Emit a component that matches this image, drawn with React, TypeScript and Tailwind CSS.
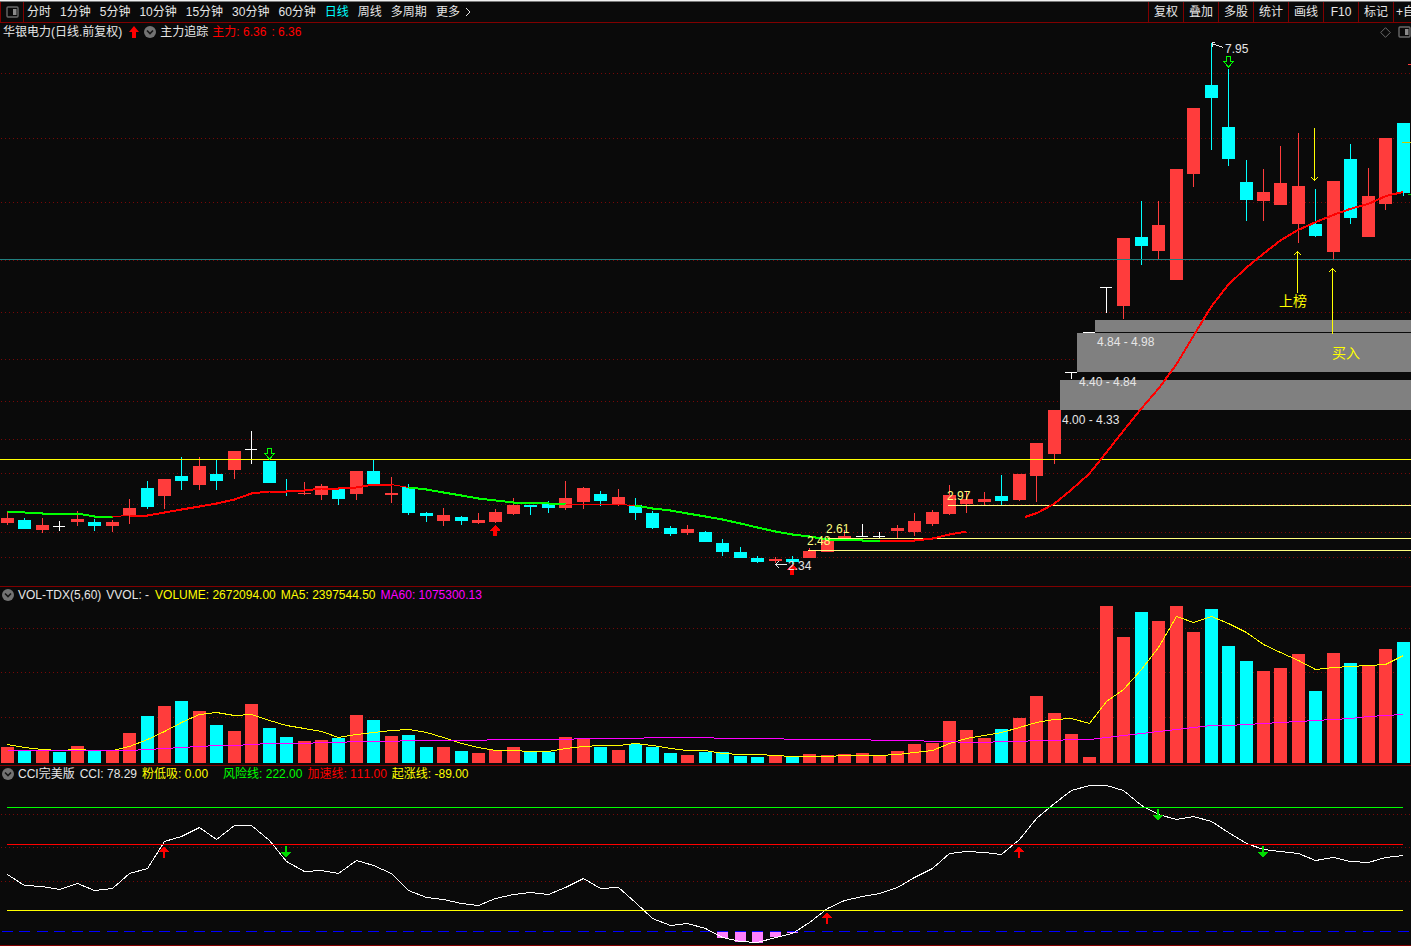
import type { ReactNode } from "react";

const RED = "#ff3c3c";
const CYAN = "#00ffff";
const WHITE = "#ffffff";

const COUNT = 81;
const STEP = 17.445;
const center = (i: number) => Math.floor(7.5 + i * STEP);

type Kind = "r" | "c" | "w";

// kind, high, body top, body bottom, low
const candles: [Kind, number, number, number, number][] = [
  ["r", 511, 518, 523, 525],
  ["c", 518, 520, 529, 529],
  ["r", 518, 525, 530, 533],
  ["w", 521, 526, 527, 531],
  ["r", 511, 519, 522, 526],
  ["c", 519, 522, 526, 531],
  ["r", 520, 522, 526, 532],
  ["r", 499, 508, 516, 524],
  ["c", 481, 488, 507, 509],
  ["r", 479, 479, 496, 509],
  ["c", 457, 476, 481, 490],
  ["r", 457, 466, 485, 490],
  ["c", 460, 474, 481, 490],
  ["r", 451, 451, 470, 479],
  ["w", 431, 449, 450, 464],
  ["c", 461, 461, 483, 483],
  ["c", 479, 491, 492, 496],
  ["r", 482, 493, 494, 495],
  ["r", 484, 486, 495, 500],
  ["c", 488, 488, 499, 505],
  ["r", 471, 471, 494, 500],
  ["c", 460, 471, 484, 484],
  ["r", 477, 493, 495, 503],
  ["c", 484, 487, 513, 515],
  ["c", 512, 513, 516, 522],
  ["r", 508, 515, 521, 526],
  ["c", 516, 517, 521, 525],
  ["r", 513, 520, 523, 524],
  ["r", 509, 512, 522, 523],
  ["r", 498, 505, 514, 515],
  ["c", 505, 505, 507, 515],
  ["c", 501, 504, 508, 513],
  ["r", 481, 498, 508, 510],
  ["r", 487, 488, 502, 509],
  ["c", 491, 494, 501, 506],
  ["r", 489, 497, 504, 506],
  ["c", 498, 505, 513, 520],
  ["c", 511, 513, 528, 529],
  ["c", 526, 528, 534, 536],
  ["r", 525, 529, 533, 535],
  ["c", 531, 532, 542, 542],
  ["c", 539, 543, 552, 556],
  ["c", 547, 552, 558, 558],
  ["c", 556, 558, 562, 563],
  ["r", 557, 559, 561, 563],
  ["c", 556, 559, 562, 564],
  ["r", 548, 551, 558, 558],
  ["r", 536, 539, 552, 552],
  ["r", 530, 536, 539, 539],
  ["w", 524, 536, 537, 537],
  ["w", 532, 536, 537, 539],
  ["r", 525, 528, 531, 539],
  ["r", 513, 521, 532, 536],
  ["r", 510, 512, 524, 526],
  ["r", 485, 495, 514, 515],
  ["r", 491, 499, 504, 513],
  ["r", 492, 499, 502, 505],
  ["c", 475, 496, 501, 505],
  ["r", 474, 474, 500, 501],
  ["r", 443, 443, 476, 502],
  ["r", 410, 410, 454, 464],
  ["w", 372, 372, 373, 379],
  ["w", 332, 332, 333, 333],
  ["w", 287, 287, 288, 313],
  ["r", 238, 238, 306, 319],
  ["c", 201, 237, 246, 265],
  ["r", 201, 225, 251, 260],
  ["r", 169, 169, 280, 280],
  ["r", 108, 108, 174, 187],
  ["c", 43, 85, 98, 150],
  ["c", 69, 127, 159, 166],
  ["c", 160, 182, 200, 221],
  ["r", 169, 192, 201, 221],
  ["r", 146, 183, 205, 205],
  ["r", 133, 186, 224, 243],
  ["c", 189, 224, 236, 237],
  ["r", 181, 181, 252, 260],
  ["c", 144, 159, 218, 224],
  ["r", 168, 196, 237, 237],
  ["r", 138, 138, 204, 210],
  ["c", 123, 123, 193, 196],
];

const volumeTops = [
  747, 751, 751, 752, 746, 751, 751, 733, 716, 706, 701, 711, 725, 731, 704, 728, 737, 741, 740, 738,
  715, 720, 736, 735, 747, 747, 751, 753, 750, 747, 752, 752, 737, 739, 747, 750, 744, 747, 753, 755,
  752, 752, 756, 757, 756, 757, 754, 755, 754, 753, 756, 751, 744, 743, 721, 730, 738, 729, 718, 696,
  713, 734, 757, 606, 637, 612, 621, 606, 632, 609, 646, 661, 671, 668, 654, 691, 653, 663, 666, 649,
  642,
];

const volumeMa5 = [
  744, 747, 749, 750, 749, 750, 750, 746, 739, 731, 722, 714, 712, 715, 714, 720, 725, 728, 731, 737,
  734, 732, 730, 729, 732, 737, 743, 747, 750, 750, 751, 751, 748, 746, 745, 745, 743, 745, 748, 750,
  750, 753, 754, 754, 755, 756, 756, 756, 755, 755, 755, 754, 752, 750, 743, 738, 735, 732, 727, 722,
  719, 718, 723, 701, 689, 669, 647, 616, 622, 616, 623, 632, 644, 652, 660, 669, 667, 666, 665, 664,
  655,
];

const volumeMa60 = [
  750, 750, 750, 750, 750, 750, 750, 750, 749, 748, 747, 746, 745, 745, 744, 743, 743, 743, 742, 742,
  741, 741, 741, 740, 740, 740, 740, 740, 739, 739, 739, 739, 739, 738, 738, 738, 738, 737, 737, 737,
  737, 738, 738, 738, 738, 739, 739, 739, 739, 739, 740, 740, 740, 741, 741, 742, 742, 741, 741, 740,
  740, 739, 739, 737, 735, 733, 731, 729, 727, 725, 725, 724, 723, 722, 721, 720, 719, 718, 716, 715,
  714,
];

const cci = [
  874, 885, 886, 889, 883, 890, 888, 873, 868, 841, 836, 827, 839, 825, 825, 840, 861, 871, 870, 873,
  860, 865, 873, 890, 897, 899, 903, 905, 898, 894, 892, 894, 887, 878, 888, 887, 902, 918, 925, 923,
  928, 937, 941, 942, 937, 933, 922, 908, 900, 896, 893, 887, 877, 868, 853, 851, 852, 854, 839, 818,
  803, 790, 785, 785, 790, 805, 814, 819, 816, 821, 832, 843, 849, 851, 853, 860, 857, 861, 862, 857,
  855,
];

// trend line pieces: first candle, colour, width, y values
const trend: [number, string, number, number[]][] = [
  [0, "#00ff00", 2, [511, 512, 513, 513, 513, 516, 516]],
  [6, "#ff0000", 1, [516, 515]],
  [7, "#ff0000", 2, [515, 515, 512, 509, 506, 503, 499, 493, 491, 491, 490, 488, 488, 487, 484, 484]],
  [22, "#ff0000", 1, [484, 487]],
  [23, "#00ff00", 2, [487, 489, 492, 495, 498, 500, 502, 502, 503, 504]],
  [32, "#ff0000", 1, [504, 504, 504, 504, 505]],
  [36, "#00ff00", 2, [505, 508, 510, 513, 516, 519, 523, 527, 531, 534, 536, 539, 539, 540, 540]],
  [50, "#ff0000", 2, [540, 540, 540, 538, 534, 531]],
];

const rally = [
  [1025, 517], [1037, 513], [1054, 504], [1071, 490], [1089, 474], [1106, 453], [1124, 430],
  [1141, 409], [1159, 388], [1176, 365], [1194, 335], [1211, 307], [1228, 285], [1246, 268],
  [1263, 254], [1281, 240], [1298, 230], [1316, 222], [1333, 215], [1350, 209], [1368, 204],
  [1386, 196], [1403, 192],
];

const bands = [
  { x: 1095, top: 320, bottom: 332, label: "4.84 - 4.98", labelY: 346 },
  { x: 1077, top: 333, bottom: 372, label: "4.40 - 4.84", labelY: 386 },
  { x: 1060, top: 380, bottom: 410, label: "4.00 - 4.33", labelY: 424 },
];

const levels = [
  { x: 948, y: 505, label: "2.97", labelY: 500 },
  { x: 827, y: 538, label: "2.61", labelY: 533 },
  { x: 808, y: 550, label: "2.48", labelY: 545 },
];

const periods = ["分时", "1分钟", "5分钟", "10分钟", "15分钟", "30分钟", "60分钟", "日线", "周线", "多周期", "更多"];
const tools = ["复权", "叠加", "多股", "统计", "画线", "F10", "标记"];

const toPoints = (ys: number[], from = 0) =>
  ys.map((y, i) => `${center(from + i) + 0.5},${y + 0.5}`).join(" ");

function HLine({ y, x1 = 0, x2 = 1411, color }: { y: number; x1?: number; x2?: number; color: string }) {
  return <rect x={x1} y={y} width={x2 - x1} height={1} fill={color} />;
}

function Grid({ rows }: { rows: number[] }) {
  return (
    <g stroke="#780808" strokeDasharray="1 3">
      {rows.map((y) => (
        <line key={y} x1={1} x2={1411} y1={y + 0.5} y2={y + 0.5} />
      ))}
    </g>
  );
}

function Candle({ index }: { index: number }) {
  const [kind, high, top, bottom, low] = candles[index];
  const x = center(index);
  const fill = kind === "r" ? RED : kind === "c" ? CYAN : WHITE;
  return (
    <g fill={fill}>
      <rect x={x} y={high} width={1} height={low - high} />
      <rect x={x - 6} y={top} width={kind === "w" ? 12 : 13} height={bottom - top} />
    </g>
  );
}

function BuyArrow({ x, y }: { x: number; y: number }) {
  return <path d={`M${x} ${y}l5 5v1h-3v5h-4v-5h-3v-1z`} fill="#ff0000" />;
}

function SellArrow({ x, y }: { x: number; y: number }) {
  return (
    <path
      d={`M${x - 1.5} ${y + 0.5}h4v5h3l-5 5.5l-5 -5.5h3z`}
      fill="none"
      stroke="#00ff00"
    />
  );
}

function UpSignal({ x, y }: { x: number; y: number }) {
  return <path d={`M${x} ${y}l5 6h-4v6h-2v-6h-4z`} fill="#ff0000" />;
}

function DownSignal({ x, y }: { x: number; y: number }) {
  return <path d={`M${x} ${y + 12}l5 -6h-4v-6h-2v6h-4z`} fill="#00dc00" />;
}

function PanelIcon() {
  return (
    <svg width="13" height="12" viewBox="0 0 13 12" className="shrink-0" aria-hidden="true">
      <rect x="1" y="1" width="11" height="10" rx="1" fill="none" stroke="#6a6a6a" strokeWidth="1.4" />
      <rect x="7" y="3" width="3.5" height="6" fill="#8a8a8a" />
    </svg>
  );
}

function ToggleButton({ label }: { label: string }) {
  return (
    <button type="button" aria-label={label} className="size-3 shrink-0">
      <svg viewBox="0 0 12 12" className="size-3">
        <circle cx="6" cy="6" r="6" fill="#737373" />
        <path d="M3 4.5l3 3l3 -3" fill="none" stroke="#161616" strokeWidth="1.6" />
      </svg>
    </button>
  );
}

function Chart({ top, height, label, children }: { top: number; height: number; label: string; children: ReactNode }) {
  return (
    <svg
      viewBox={`0 ${top} 1411 ${height}`}
      className="block h-auto w-full"
      shapeRendering="crispEdges"
      role="img"
      aria-label={label}
    >
      {children}
    </svg>
  );
}

function Toolbar() {
  return (
    <header className="flex h-[22px] items-stretch justify-between overflow-hidden border-t border-b border-t-[#7a7a7a] border-b-[#800000]">
      <div className="flex">
        <button type="button" aria-label="侧栏" className="flex w-6 items-center justify-center border-x border-[#800000]">
          <PanelIcon />
        </button>
        <nav className="flex items-center gap-[9px] pl-[3px]">
          {periods.map((p) => (
            <button key={p} type="button" className={p === "日线" ? "text-[#00ffff]" : "text-[#e6e6e6]"}>
              {p}
            </button>
          ))}
          <svg width="6" height="10" viewBox="0 0 6 10" className="-ml-1" aria-hidden="true">
            <path d="M1 1l4 4l-4 4" fill="none" stroke="#e6e6e6" />
          </svg>
        </nav>
      </div>
      <div className="flex text-[#e6e6e6]">
        {tools.map((t) => (
          <button key={t} type="button" className="w-[35px] border-l border-[#800000]">
            {t}
          </button>
        ))}
        <button type="button" className="w-[18px] overflow-hidden border-l border-[#800000] pl-0.5 text-left whitespace-nowrap">
          +自
        </button>
      </div>
    </header>
  );
}

function PricePanel() {
  return (
    <section className="border-b border-[#800000]">
      <div className="flex h-[19px] items-center justify-between pb-px pl-[3px]">
        <div className="flex items-center">
          <span>华银电力(日线.前复权)</span>
          <svg width="10" height="12" viewBox="0 0 10 12" className="ml-[7px]" aria-hidden="true">
            <path d="M5 0l5 6h-3v6h-4v-6h-3z" fill="#ff0000" />
          </svg>
          <span className="mx-1 flex pl-px">
            <ToggleButton label="主图指标" />
          </span>
          <span>主力追踪</span>
          <span className="ml-1 text-[#ff0000]">主力: 6.36</span>
          <span className="ml-[5px] text-[#ff0000]">: 6.36</span>
        </div>
        <div className="flex items-center gap-[7px]">
          <svg width="11" height="11" viewBox="0 0 11 11" aria-hidden="true">
            <path d="M5.5 .7l4.8 4.8l-4.8 4.8l-4.8 -4.8z" fill="none" stroke="#6a6a6a" />
          </svg>
          <PanelIcon />
        </div>
      </div>

      <Chart top={42} height={544} label="日线">
        <Grid rows={[73, 138, 202, 260, 312, 359, 401, 439, 473, 504, 532, 557]} />

        {/* Gap zones */}
        {bands.map((b) => (
          <rect key={b.label} x={b.x} y={b.top} width={1411 - b.x} height={b.bottom - b.top} fill="#808080" />
        ))}

        {candles.map((_, i) => (
          <Candle key={i} index={i} />
        ))}

        {/* Horizontal guides */}
        <HLine y={259} color="#208080" />
        <HLine y={459} color="#ffff00" />
        {levels.map((l) => (
          <HLine key={l.label} x1={l.x} y={l.y} color="#ffff80" />
        ))}

        {/* Trend line */}
        {trend.map(([from, color, width, ys]) => (
          <polyline key={from} points={toPoints(ys, from)} fill="none" stroke={color} strokeWidth={width} />
        ))}
        <polyline points={rally.map((p) => p.join(",")).join(" ")} fill="none" stroke="#ff0000" strokeWidth={2} />

        {/* Signals */}
        <BuyArrow x={495} y={525} />
        <BuyArrow x={792} y={564} />
        <SellArrow x={269} y={448} />
        <SellArrow x={1228} y={56} />

        {/* Notes */}
        <g fill="none" stroke="#ffff00">
          <path d="M1314.5 128v53M1311 177l3.5 3.5l3.5 -3.5" />
          <path d="M1297.5 293v-42M1294 255l3.5 -3.5l3.5 3.5" />
          <path d="M1332.5 334v-66M1329 272l3.5 -3.5l3.5 3.5" />
        </g>
        <g fill="none" stroke="#e6e6e6">
          <path d="M1223 47.5l-11 -4M1215 42.5h-3v4" />
          <path d="M787 564.5h-12M779 561l-3.5 3.5l3.5 3.5" />
        </g>
        <g fill="#ffff00" fontSize="14">
          <text x="1279" y="306">上榜</text>
          <text x="1332" y="358">买入</text>
        </g>
        <g fill="#e6e6e6" fontSize="12">
          <text x="1225" y="53">7.95</text>
          <text x="788" y="570">2.34</text>
          {bands.map((b) => (
            <text key={b.label} x={b.x + 2} y={b.labelY}>
              {b.label}
            </text>
          ))}
        </g>
        <g fill="#ffff80" fontSize="12">
          {levels.map((l) => (
            <text key={l.label} x={l.x - 1} y={l.labelY}>
              {l.label}
            </text>
          ))}
        </g>

        {/* Edge marks */}
        <HLine x1={1408} y={64} color={RED} />
        <HLine x1={1402} y={142} color="#c8c800" />
        <HLine x1={1408} y={194} color="#00c800" />
      </Chart>
    </section>
  );
}

function VolumePanel() {
  return (
    <section className="border-b border-[#800000]">
      <div className="flex h-4 items-center gap-[5px] pl-0.5">
        <ToggleButton label="成交量指标" />
        <span className="-ml-px">VOL-TDX(5,60)</span>
        <span>VVOL: -</span>
        <span className="ml-px text-[#ffff00]">VOLUME: 2672094.00</span>
        <span className="text-[#ffff00]">MA5: 2397544.50</span>
        <span className="text-[#ff00ff]">MA60: 1075300.13</span>
      </div>
      <Chart top={603} height={162} label="成交量">
        <Grid rows={[628, 672, 717]} />
        {volumeTops.map((y, i) => (
          <rect
            key={i}
            x={center(i) - 6}
            y={y}
            width={13}
            height={763 - y}
            fill={candles[i][0] === "c" || i === 3 ? CYAN : RED}
          />
        ))}
        <polyline points={toPoints(volumeMa5)} fill="none" stroke="#ffff00" />
        <polyline points={toPoints(volumeMa60)} fill="none" stroke="#ff00ff" />
      </Chart>
    </section>
  );
}

function CciPanel() {
  return (
    <section className="border-b border-[#800000]">
      <div className="flex h-4 items-center gap-[5px] pl-0.5">
        <ToggleButton label="CCI指标" />
        <span className="-ml-px">CCI完美版</span>
        <span>CCI: 78.29</span>
        <span className="text-[#ffff00]">粉低吸: 0.00</span>
        <span className="ml-2.5 text-[#00ff00]">风险线: 222.00</span>
        <span className="text-[#ff0000]">加速线: 111.00</span>
        <span className="text-[#ffff00]">起涨线: -89.00</span>
      </div>
      <Chart top={782} height={163} label="CCI">
        <Grid rows={[814, 847, 881]} />
        <g fill="#ff80ff">
          {[938, 942, 943, 937, 933].map((bottom, i) => (
            <rect key={i} x={center(41 + i) - 5} y={932} width={11} height={bottom - 932} />
          ))}
        </g>
        {Array.from({ length: COUNT }, (_, i) => (
          <HLine key={i} x1={center(i) - 5} x2={center(i) + 6} y={931} color="#0000ff" />
        ))}
        <polyline points={toPoints(cci)} fill="none" stroke="#ffffff" />
        <HLine x1={7} x2={1403} y={807} color="#00ff00" />
        <HLine x1={7} x2={1403} y={844} color="#ff0000" />
        <HLine x1={7} x2={1403} y={910} color="#ffff00" />
        <UpSignal x={164} y={846} />
        <UpSignal x={827} y={912} />
        <UpSignal x={1019} y={846} />
        <DownSignal x={286} y={846} />
        <DownSignal x={1158} y={809} />
        <DownSignal x={1263} y={846} />
      </Chart>
    </section>
  );
}

export default function App() {
  return (
    <main className="min-h-screen overflow-hidden border-t border-[#f0f0f0] bg-[#0a0a0a] font-['Liberation_Sans','Noto_Sans_CJK_SC',sans-serif] text-[12px] leading-4 whitespace-nowrap text-[#e6e6e6] [font-kerning:none]">
      <Toolbar />
      <PricePanel />
      <VolumePanel />
      <CciPanel />
    </main>
  );
}
